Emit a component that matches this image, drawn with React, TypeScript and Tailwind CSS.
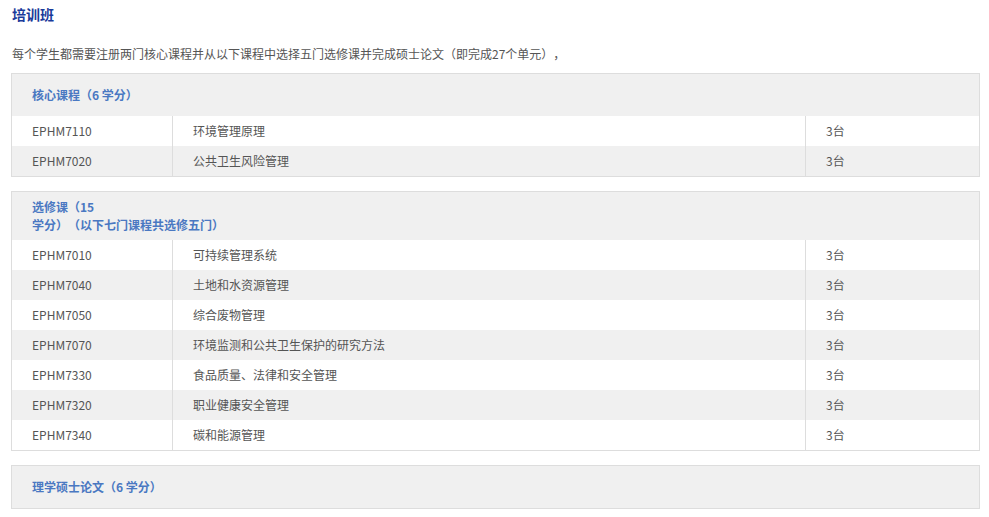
import React from "react";

type Row = { code: string; name: string; credit: string };

const core: Row[] = [
  { code: "EPHM7110", name: "环境管理原理", credit: "3台" },
  { code: "EPHM7020", name: "公共卫生风险管理", credit: "3台" },
];

const electives: Row[] = [
  { code: "EPHM7010", name: "可持续管理系统", credit: "3台" },
  { code: "EPHM7040", name: "土地和水资源管理", credit: "3台" },
  { code: "EPHM7050", name: "综合废物管理", credit: "3台" },
  { code: "EPHM7070", name: "环境监测和公共卫生保护的研究方法", credit: "3台" },
  { code: "EPHM7330", name: "食品质量、法律和安全管理", credit: "3台" },
  { code: "EPHM7320", name: "职业健康安全管理", credit: "3台" },
  { code: "EPHM7340", name: "碳和能源管理", credit: "3台" },
];

function Table({ header, rows }: { header: React.ReactNode; rows: Row[] }) {
  return (
    <div className="border border-[#dddddd]">
      <div className="bg-[#f0f0f0] min-h-[42px] flex items-center pl-[20px] py-[6px] text-[12px] leading-[18px] font-bold text-[#4a78c2]">
        <div>{header}</div>
      </div>
      {rows.map((r, i) => (
        <div
          key={r.code}
          className={`flex h-[30px] items-center text-[12px] text-[#555555] ${
            i % 2 === 0 ? "bg-white" : "bg-[#f0f0f0]"
          }`}
        >
          <div className="w-[161px] h-full flex items-center pl-[20px] border-r border-[#dddddd]">
            {r.code}
          </div>
          <div className="flex-1 h-full flex items-center pl-[20px] border-r border-[#dddddd]">
            {r.name}
          </div>
          <div className="w-[173px] h-full flex items-center pl-[20px]">{r.credit}</div>
        </div>
      ))}
    </div>
  );
}

export default function App() {
  return (
    <div
      className="bg-white w-[989px] h-[517px] overflow-hidden pl-[11px] pr-[9px] [text-spacing-trim:space-all]"
      style={{ fontFamily: '"Microsoft YaHei", "Noto Sans CJK SC", "Noto Sans", sans-serif' }}
    >
      <h1 className="pt-[4px] pl-[1px] text-[14px] leading-[20px] font-bold text-[#1a3a9a]">培训班</h1>
      <p className="mt-[21px] pl-[1px] text-[12px] leading-[18px] text-[#555555]">
        每个学生都需要注册两门核心课程并从以下课程中选择五门选修课并完成硕士论文（即完成27个单元），
      </p>
      <div className="mt-[10px] flex flex-col gap-[14px]">
        <Table header="核心课程（6 学分）" rows={core} />
        <Table
          header={
            <>
              选修课（15
              <br />
              学分）（以下七门课程共选修五门）
            </>
          }
          rows={electives}
        />
        <Table header="理学硕士论文（6 学分）" rows={[]} />
      </div>
    </div>
  );
}
